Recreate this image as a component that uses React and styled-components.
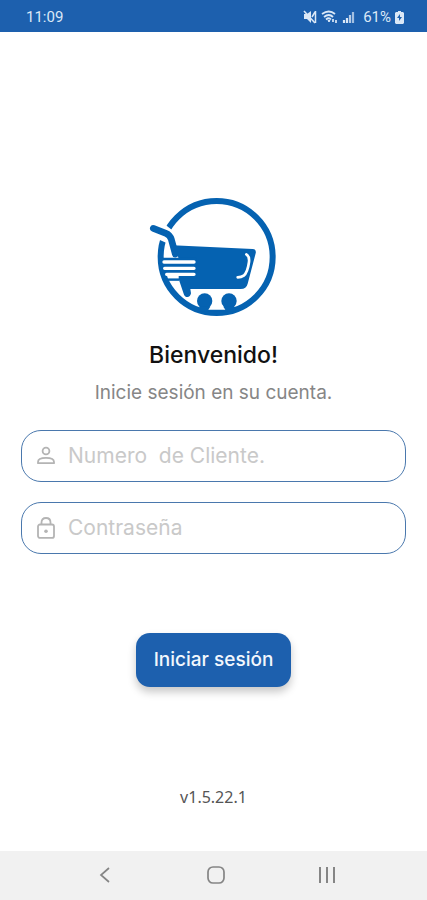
import React, { useState } from "react";
import styled, { createGlobalStyle } from "styled-components";

const colors = {
  primary: "#1d60ae",
  logo: "#0562b1",
  border: "#4a78ad",
  icon: "#b4b4b4",
  placeholder: "#c9c9c9",
  navIcon: "#858585",
};

const GlobalStyle = createGlobalStyle`
  * {
    box-sizing: border-box;
  }

  body {
    margin: 0;
    background-color: #ffffff;
    font-family: Inter, "Liberation Sans", sans-serif;
  }
`;

const Screen = styled.div`
  display: flex;
  flex-direction: column;
  min-height: 100vh;
`;

const StatusBar = styled.header`
  display: flex;
  align-items: center;
  justify-content: space-between;
  height: 32px;
  padding: 2px 23px 0 26px;
  background-color: ${colors.primary};
  color: #dbe8f7;
  font-family: Roboto, sans-serif;
  font-size: 15px;
  line-height: 20px;
`;

const StatusIcons = styled.div`
  display: flex;
  align-items: center;
  gap: 4px;
`;

const Battery = styled.span`
  margin-left: 4px;
`;

const Main = styled.main`
  display: flex;
  flex: 1;
  flex-direction: column;
  align-items: center;
  padding: 158px 21px 44px;
`;

const Logo = styled.svg`
  display: block;
  flex-shrink: 0;
`;

const Title = styled.h1`
  margin: 15px 0 0;
  color: #111111;
  font-size: 23px;
  font-weight: 500;
  line-height: 30px;
`;

const Subtitle = styled.p`
  margin: 8px 0 0;
  color: #868686;
  font-size: 19px;
  line-height: 30px;
`;

const Form = styled.form`
  display: flex;
  flex-direction: column;
  align-items: center;
  gap: 20px;
  width: 100%;
  margin-top: 22px;
`;

const Field = styled.label`
  display: flex;
  align-items: center;
  gap: 11px;
  width: 100%;
  height: 52px;
  padding: 0 13px;
  border: 1px solid ${colors.border};
  border-radius: 20px;
  background-color: #ffffff;
`;

const Input = styled.input`
  flex: 1;
  min-width: 0;
  padding: 0;
  border: none;
  outline: none;
  background: transparent;
  color: #333333;
  font-family: inherit;
  font-size: 21px;
  line-height: 28px;

  &::placeholder {
    color: ${colors.placeholder};
    opacity: 1;
  }
`;

const LoginButton = styled.button`
  height: 54px;
  margin-top: 59px;
  padding: 0 18px;
  border: none;
  border-radius: 14px;
  background-color: ${colors.primary};
  box-shadow: 0 5px 8px rgba(0, 0, 0, 0.22);
  color: #f2f7fd;
  cursor: pointer;
  font-family: inherit;
  font-size: 19px;
  font-weight: 500;
  line-height: 28px;
`;

const Version = styled.p`
  margin: auto 0 0;
  color: #555555;
  font-family: "Noto Sans", sans-serif;
  font-size: 16px;
  line-height: 20px;
`;

const NavBar = styled.nav`
  display: flex;
  align-items: center;
  justify-content: space-between;
  height: 49px;
  padding: 0 88px 2px 92px;
  background-color: #f1f1f1;
`;

const NavButton = styled.button`
  display: flex;
  padding: 0;
  border: none;
  background: transparent;
  color: ${colors.navIcon};
  cursor: pointer;
`;

const CartLogo = () => (
  <Logo width="145" height="135" viewBox="3 0 435 405" role="img" aria-label="Carrito">
    <circle cx="230" cy="201" r="168" fill="none" stroke={colors.logo} strokeWidth="18" />
    {/* gap in the ring where the handle crosses it */}
    <path d="M40 140 L58 149 L78 158 L96 170 L104 140 L97 121 L78 106 L60 90 Z" fill="#ffffff" />
    <path
      d="M40 115 L78 130 Q90 135 94 148 L106 192"
      fill="none"
      stroke={colors.logo}
      strokeWidth="20"
      strokeLinecap="round"
      strokeLinejoin="round"
    />
    <path
      d="M98 166 L338 177 Q350 178 347 190 L323 281 Q319 297 302 297 H151 L153 310 Q151 321 142 321 Q134 321 131 311 L115 264 V202 Z"
      fill={colors.logo}
    />
    <path d="M62 203 H170 V266 H74 Z" fill={colors.logo} />
    <path d="M72 216 H162 M74 235 H162 M80 253 H162" stroke="#ffffff" strokeWidth="10" strokeLinecap="round" />
    <path d="M80 254 H116 V266 H84 Z" fill="#ffffff" />
    <path d="M78 269 H117" stroke={colors.logo} strokeWidth="7" />
    <path
      d="M319 193 Q329 199 327 216 Q323 247 311 257 Q304 262 293 262"
      fill="none"
      stroke="#ffffff"
      strokeWidth="8"
      strokeLinecap="round"
    />
    <circle cx="194" cy="333" r="23" fill={colors.logo} />
    <circle cx="267" cy="333" r="23" fill={colors.logo} />
    <path d="M180 350 H281 L290 364 H170 Z" fill={colors.logo} />
    <path d="M205 359 L215 344 H246 L256 359 Z" fill="#ffffff" />
  </Logo>
);

const MuteIcon = () => (
  <svg width="14" height="14" viewBox="0 0 14 14" fill="none" stroke="currentColor">
    <path d="M1 4 H4 L8 1 V13 L4 9 H1 Z" fill="currentColor" stroke="none" />
    <path d="M1 1 L12 13" strokeWidth="1.6" />
    <path d="M9 7 L12 2 M12.5 1 V13" strokeWidth="1.5" />
  </svg>
);

const WifiIcon = () => (
  <svg width="17" height="14" viewBox="0 0 17 14" fill="none" stroke="currentColor">
    <path d="M1 4 Q8 -1 14 4 M3 7 Q8 3 12 7 M5 9.5 Q8 7 10 9.5" strokeWidth="1.8" />
    <path d="M7 10.5 L9 10.5 L8 12 Z" fill="currentColor" />
    <path d="M12 9 V12 M15 10 V13" strokeWidth="1.7" />
  </svg>
);

const SignalIcon = () => (
  <svg width="13" height="14" viewBox="0 0 13 14" stroke="currentColor" strokeWidth="2.2">
    <path d="M2 10 V13 M5 8 V13" />
    <path d="M8 5 V13" opacity="0.8" />
    <path d="M11 2 V13" opacity="0.7" />
  </svg>
);

const BatteryIcon = () => (
  <svg width="9" height="13" viewBox="0 0 9 13">
    <path d="M3 0 H6 V1 H8 L9 2 V12 L8 13 H1 L0 12 V2 L1 1 H3 Z" fill="currentColor" />
    <path d="M5 3 L2 7 H4 V10 L7 6 H5 Z" fill={colors.primary} />
  </svg>
);

const UserIcon = () => (
  <svg width="22" height="22" viewBox="0 0 22 22" fill="none" stroke={colors.icon} strokeWidth="1.8">
    <circle cx="11" cy="6" r="3.4" />
    <path d="M3 18.2 V17 Q3 12.8 11 12.8 Q19 12.8 19 17 V18.2 Z" strokeLinejoin="round" />
  </svg>
);

const LockIcon = () => (
  <svg width="22" height="22" viewBox="0 0 22 22" fill="none" stroke={colors.icon} strokeWidth="1.8">
    <rect x="3" y="7.5" width="16" height="13.4" rx="2" />
    <path d="M6.5 7.5 V5.5 Q6.5 1 11 1 Q15.5 1 15.5 5.5 V7.5" />
    <circle cx="11" cy="14.2" r="1.8" fill={colors.icon} stroke="none" />
  </svg>
);

const BackIcon = () => (
  <svg width="24" height="24" viewBox="0 0 24 24" fill="none" stroke="currentColor" strokeWidth="1.7">
    <path d="M17 5 L9 12 L17 19" />
  </svg>
);

const HomeIcon = () => (
  <svg width="24" height="24" viewBox="0 0 24 24" fill="none" stroke="currentColor" strokeWidth="1.7">
    <rect x="4" y="4" width="16" height="16" rx="5" />
  </svg>
);

const RecentsIcon = () => (
  <svg width="24" height="24" viewBox="0 0 24 24" stroke="currentColor" strokeWidth="2">
    <path d="M5 4 V20 M12 4 V20 M19 4 V20" />
  </svg>
);

const App = () => {
  const [client, setClient] = useState("");
  const [password, setPassword] = useState("");

  return (
    <>
      <GlobalStyle />
      <Screen>
        <StatusBar>
          <span>11:09</span>
          <StatusIcons>
            <MuteIcon />
            <WifiIcon />
            <SignalIcon />
            <Battery>61%</Battery>
            <BatteryIcon />
          </StatusIcons>
        </StatusBar>
        <Main>
          <CartLogo />
          <Title>Bienvenido!</Title>
          <Subtitle>Inicie sesión en su cuenta.</Subtitle>
          <Form onSubmit={(e) => e.preventDefault()}>
            <Field>
              <UserIcon />
              <Input
                type="text"
                aria-label="Numero de Cliente"
                placeholder="Numero  de Cliente."
                value={client}
                onChange={(e) => setClient(e.target.value)}
              />
            </Field>
            <Field>
              <LockIcon />
              <Input
                type="password"
                aria-label="Contraseña"
                placeholder="Contraseña"
                value={password}
                onChange={(e) => setPassword(e.target.value)}
              />
            </Field>
            <LoginButton type="submit">Iniciar sesión</LoginButton>
          </Form>
          <Version>v1.5.22.1</Version>
        </Main>
        <NavBar>
          <NavButton type="button" aria-label="Atrás">
            <BackIcon />
          </NavButton>
          <NavButton type="button" aria-label="Inicio">
            <HomeIcon />
          </NavButton>
          <NavButton type="button" aria-label="Recientes">
            <RecentsIcon />
          </NavButton>
        </NavBar>
      </Screen>
    </>
  );
};

export default App;
